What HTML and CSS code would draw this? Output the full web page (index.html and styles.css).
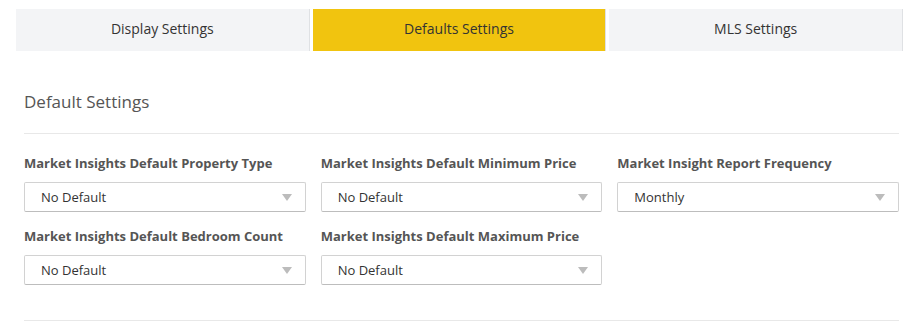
FILE: index.html
```html
<!DOCTYPE html>
<html lang="en">
  <head>
    <meta charset="UTF-8" />
    <title>Settings</title>
    <link rel="stylesheet" href="styles.css">
  </head>
  <body>
    <div class="page">
      <div class="tabs">
        <div class="tab">Display Settings</div>
        <div class="tab active">Defaults Settings</div>
        <div class="tab">MLS Settings</div>
      </div>

      <div class="section">
        <h3 class="section-title">Default Settings</h3>

        <div class="fields">
          <div class="field">
            <label>Market Insights Default Property Type</label>
            <div class="select">
              <span>No Default</span>
              <svg width="10" height="7" viewBox="0 0 10 7"><path d="M0 0h10L5 7z" /></svg>
            </div>
          </div>
          <div class="field">
            <label>Market Insights Default Minimum Price</label>
            <div class="select">
              <span>No Default</span>
              <svg width="10" height="7" viewBox="0 0 10 7"><path d="M0 0h10L5 7z" /></svg>
            </div>
          </div>
          <div class="field">
            <label>Market Insight Report Frequency</label>
            <div class="select">
              <span>Monthly</span>
              <svg width="10" height="7" viewBox="0 0 10 7"><path d="M0 0h10L5 7z" /></svg>
            </div>
          </div>
          <div class="field">
            <label>Market Insights Default Bedroom Count</label>
            <div class="select">
              <span>No Default</span>
              <svg width="10" height="7" viewBox="0 0 10 7"><path d="M0 0h10L5 7z" /></svg>
            </div>
          </div>
          <div class="field">
            <label>Market Insights Default Maximum Price</label>
            <div class="select">
              <span>No Default</span>
              <svg width="10" height="7" viewBox="0 0 10 7"><path d="M0 0h10L5 7z" /></svg>
            </div>
          </div>
        </div>
      </div>
    </div>
  </body>
</html>
```

FILE: styles.css
```css
/* Global */
body {
  margin: 0;
  font-family: "Open Sans", "Lato", sans-serif;
  background: #ffffff;
  color: #333333;
}
.page {
  padding: 9px 16px 0;
}
/* Tabs */
.tabs {
  display: flex;
  gap: 3px;
}
.tab {
  flex: 1;
  height: 42px;
  box-sizing: border-box;
  padding-bottom: 4px;
  display: flex;
  align-items: center;
  justify-content: center;
  background: #f3f4f6;
  border-right: 1px solid #dfe1e4;
  font-size: 14px;
  color: #333333;
}
.tab.active {
  background: #f1c40f;
}
/* Section */
.section {
  padding: 0 4px 0 8px;
}
.section-title {
  margin: 41px 0 0;
  padding-bottom: 21px;
  border-bottom: 1px solid #e8e8e8;
  font-size: 17px;
  line-height: 20px;
  font-weight: normal;
  color: #555555;
}
.fields {
  display: grid;
  grid-template-columns: repeat(3, 1fr);
  column-gap: 15px;
  row-gap: 16px;
  padding: 21px 0 35px;
  border-bottom: 1px solid #e8e8e8;
}
.field label {
  display: block;
  margin-bottom: 11px;
  font-size: 13px;
  line-height: 16px;
  font-weight: bold;
  color: #555555;
}
.select {
  height: 30px;
  box-sizing: border-box;
  display: flex;
  align-items: center;
  justify-content: space-between;
  padding: 0 13px 0 16px;
  border: 1px solid #d2d2d2;
  border-bottom-color: #bdbdbd;
  border-radius: 2px;
  font-size: 13px;
  color: #333333;
}
.select svg {
  fill: #bcbcbc;
}
```
